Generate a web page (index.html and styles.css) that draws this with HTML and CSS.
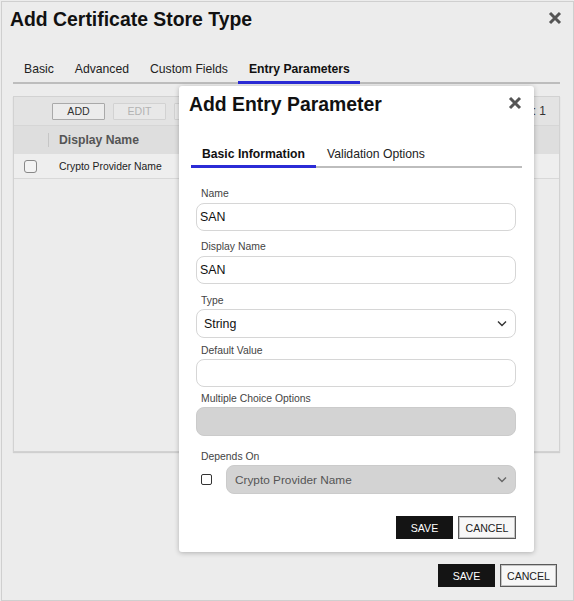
FILE: index.html
```html
<!DOCTYPE html>
<html>
<head>
<meta charset="utf-8">
<link rel="stylesheet" href="styles.css">
</head>
<body>
<div class="dialog">
  <div class="dlg-head">
    <h1 class="title">Add Certificate Store Type</h1>
    <svg class="close close-outer" width="14" height="14" viewBox="0 0 14 14"><path d="M2 2 L12 12 M12 2 L2 12" stroke="#555" stroke-width="3" stroke-linecap="butt" fill="none"/></svg>
  </div>
  <div class="tabs outer-tabs">
    <div class="tab">Basic</div>
    <div class="tab">Advanced</div>
    <div class="tab">Custom Fields</div>
    <div class="tab active">Entry Parameters</div>
  </div>
  <div class="panel">
    <div class="toolbar">
      <button class="tbtn">ADD</button>
      <button class="tbtn disabled">EDIT</button>
      <button class="tbtn disabled"></button>
      <span class="total">: 1</span>
    </div>
    <div class="thead">
      <div class="col-check"></div>
      <div class="sep"></div>
      <div class="th">Display Name</div>
    </div>
    <div class="trow">
      <div class="col-check"><span class="cbox"></span></div>
      <div class="td">Crypto Provider Name</div>
    </div>
  </div>
  <div class="footer">
    <button class="btn primary">SAVE</button>
    <button class="btn secondary">CANCEL</button>
  </div>
</div>

<div class="modal">
  <div class="modal-head">
    <h2 class="title">Add Entry Parameter</h2>
    <svg class="close close-modal" width="14" height="14" viewBox="0 0 14 14"><path d="M2 2 L12 12 M12 2 L2 12" stroke="#555" stroke-width="3" stroke-linecap="butt" fill="none"/></svg>
  </div>
  <div class="tabs modal-tabs">
    <div class="tab active">Basic Information</div>
    <div class="tab">Validation Options</div>
  </div>
  <div class="form">
    <div class="field f1">
      <div class="label">Name</div>
      <div class="input">SAN</div>
    </div>
    <div class="field f2">
      <div class="label">Display Name</div>
      <div class="input">SAN</div>
    </div>
    <div class="field f3">
      <div class="label">Type</div>
      <div class="input select"><span class="sel-text">String</span><svg width="10" height="7" viewBox="0 0 10 7"><path d="M1 1.5 L5 5.5 L9 1.5" stroke="#333" stroke-width="1.4" fill="none"/></svg></div>
    </div>
    <div class="field f4">
      <div class="label">Default Value</div>
      <div class="input"></div>
    </div>
    <div class="field f5">
      <div class="label">Multiple Choice Options</div>
      <div class="input disabled-input"></div>
    </div>
    <div class="field f6">
      <div class="label">Depends On</div>
      <div class="depends">
        <span class="mcheck"></span>
        <div class="input select disabled-input dep-select"><span class="sel-text dep-text">Crypto Provider Name</span><svg width="10" height="7" viewBox="0 0 10 7"><path d="M1 1.5 L5 5.5 L9 1.5" stroke="#666" stroke-width="1.4" fill="none"/></svg></div>
      </div>
    </div>
    <div class="modal-actions">
      <button class="btn primary m-save">SAVE</button>
      <button class="btn secondary m-cancel">CANCEL</button>
    </div>
  </div>
</div>
</body>
</html>
```
FILE: styles.css
```css
html, body {
  margin: 0;
  padding: 0;
}
body {
  background: #ececec;
  font-family: "Liberation Sans", Arial, sans-serif;
  color: #111;
  width: 574px;
  height: 601px;
  overflow: hidden;
  position: relative;
}
.dialog {
  margin: 1px 0 0 1px;
  width: 573px;
  height: 600px;
  box-sizing: border-box;
  border: 1px solid #cfcfcf;
  background: #ececec;
  display: flex;
  flex-direction: column;
}
.dlg-head {
  display: flex;
  justify-content: space-between;
  align-items: flex-start;
  padding: 5px 11px 0 8px;
}
.title {
  margin: 0;
  font-size: 19.4px;
  line-height: 24px;
  font-weight: bold;
  color: #111;
}
.close {
  display: block;
  margin-top: 4px;
}
.tabs {
  display: flex;
  border-bottom: 2px solid #bdbdbd;
}
.tab {
  font-size: 12.2px;
  line-height: 16px;
  padding: 0 11px 4px;
  margin-bottom: -2px;
  border-bottom: 3px solid transparent;
  color: #222;
}
.tab.active {
  font-weight: bold;
  color: #111;
  border-bottom-color: #2b2bd6;
}
.outer-tabs {
  margin: 30px 13px 0 11px;
}
.outer-tabs .tab {
  padding: 0 10.5px 4px;
}
.outer-tabs .tab:first-child {
  padding-left: 11px;
}
.panel {
  margin: 12px 13px 0 11px;
  height: 356px;
  box-sizing: border-box;
  border: 1px solid #d2d2d2;
  box-shadow: 0 1px 1px rgba(0,0,0,0.12);
  background: #ececec;
}
.toolbar {
  height: 28px;
  display: flex;
  align-items: center;
  padding-left: 38px;
  gap: 8px;
  background: #e3e3e3;
  border-bottom: 1px solid #d6d6d6;
}
.tbtn {
  width: 53px;
  height: 17px;
  padding: 0;
  font-family: inherit;
  font-size: 10.6px;
  color: #333;
  background: #ececec;
  border: 1px solid #a9a9a9;
  border-radius: 1px;
}
.tbtn.disabled {
  color: #b3b3b3;
  border-color: #d2d2d2;
  background: #e8e8e8;
}
.total {
  margin-left: auto;
  padding-right: 13px;
  font-size: 12px;
  color: #333;
}
.thead {
  height: 28px;
  display: flex;
  align-items: center;
  background: #dedede;
}
.col-check {
  width: 34px;
  box-sizing: border-box;
  padding-left: 10px;
  display: flex;
  align-items: center;
}
.sep {
  width: 1px;
  height: 14px;
  background: #c6c6c6;
}
.th {
  padding-left: 10px;
  font-size: 12.2px;
  font-weight: bold;
  color: #555;
}
.trow {
  height: 24px;
  display: flex;
  align-items: center;
  border-bottom: 1px solid #d8d8d8;
  background: #eeeeee;
}
.cbox {
  width: 13px;
  height: 13px;
  box-sizing: border-box;
  border: 1px solid #888;
  border-radius: 3px;
  background: #f3f3f3;
}
.td {
  margin-left: 11px;
  font-size: 10.4px;
  color: #222;
}
.footer {
  margin-top: auto;
  display: flex;
  justify-content: flex-end;
  gap: 5px;
  padding: 0 16px 13px 0;
}
.btn {
  height: 23px;
  width: 57px;
  padding: 0;
  font-family: inherit;
  font-size: 10.6px;
  box-sizing: border-box;
}
.btn.primary {
  background: #141414;
  color: #fff;
  border: 1px solid #141414;
}
.btn.secondary {
  background: #f7f7f7;
  color: #222;
  border: 1px solid #5a5a5a;
  box-shadow: inset 0 0 0 1px #c4c4c4;
}

/* modal */
.modal {
  position: absolute;
  left: 179px;
  top: 86px;
  width: 355px;
  height: 466px;
  background: #fff;
  border-radius: 3px;
  box-shadow: 0 1px 5px rgba(0,0,0,0.25);
}
.modal-head {
  display: flex;
  justify-content: space-between;
  align-items: flex-start;
  padding: 6px 12px 0 10px;
}
.modal-tabs {
  margin: 30px 12px 0 12px;
}
.modal-tabs .tab {
  padding-bottom: 3px;
}
.form {
  margin: 19px 18px 0 17px;
}
.label {
  font-size: 10.4px;
  line-height: 14px;
  color: #444;
  padding-left: 5px;
  margin-bottom: 1px;
}
.f1 .label { margin-bottom: 2px; }
.f2 { margin-top: 9px; }
.f2 .label { margin-bottom: 2px; }
.f3 { margin-top: 10px; }
.f4 { margin-top: 6px; }
.f5 { margin-top: 5px; }
.f6 { margin-top: 14px; }
.input {
  height: 28px;
  box-sizing: border-box;
  border: 1px solid #d6d6d6;
  border-radius: 8px;
  background: #fff;
  font-size: 12.4px;
  color: #111;
  padding-left: 3px;
  display: flex;
  align-items: center;
}
.select {
  height: 29px;
  padding: 0 8px 0 7px;
  justify-content: space-between;
}
.disabled-input {
  background: #d3d3d3;
  border-color: #cbcbcb;
  height: 29px;
}
.depends {
  display: flex;
  align-items: center;
}
.mcheck {
  width: 11px;
  height: 11px;
  box-sizing: border-box;
  border: 1.5px solid #333;
  border-radius: 2px;
  margin-left: 5px;
  margin-right: 14px;
  flex: none;
}
.dep-select {
  flex: 1;
  padding-left: 8px;
}
.dep-text {
  color: #555;
  font-size: 11.8px;
}
.modal-actions {
  display: flex;
  justify-content: flex-end;
  gap: 5px;
  margin-top: 22px;
}
.m-save { width: 57px; }
.m-cancel { width: 58px; }
```
